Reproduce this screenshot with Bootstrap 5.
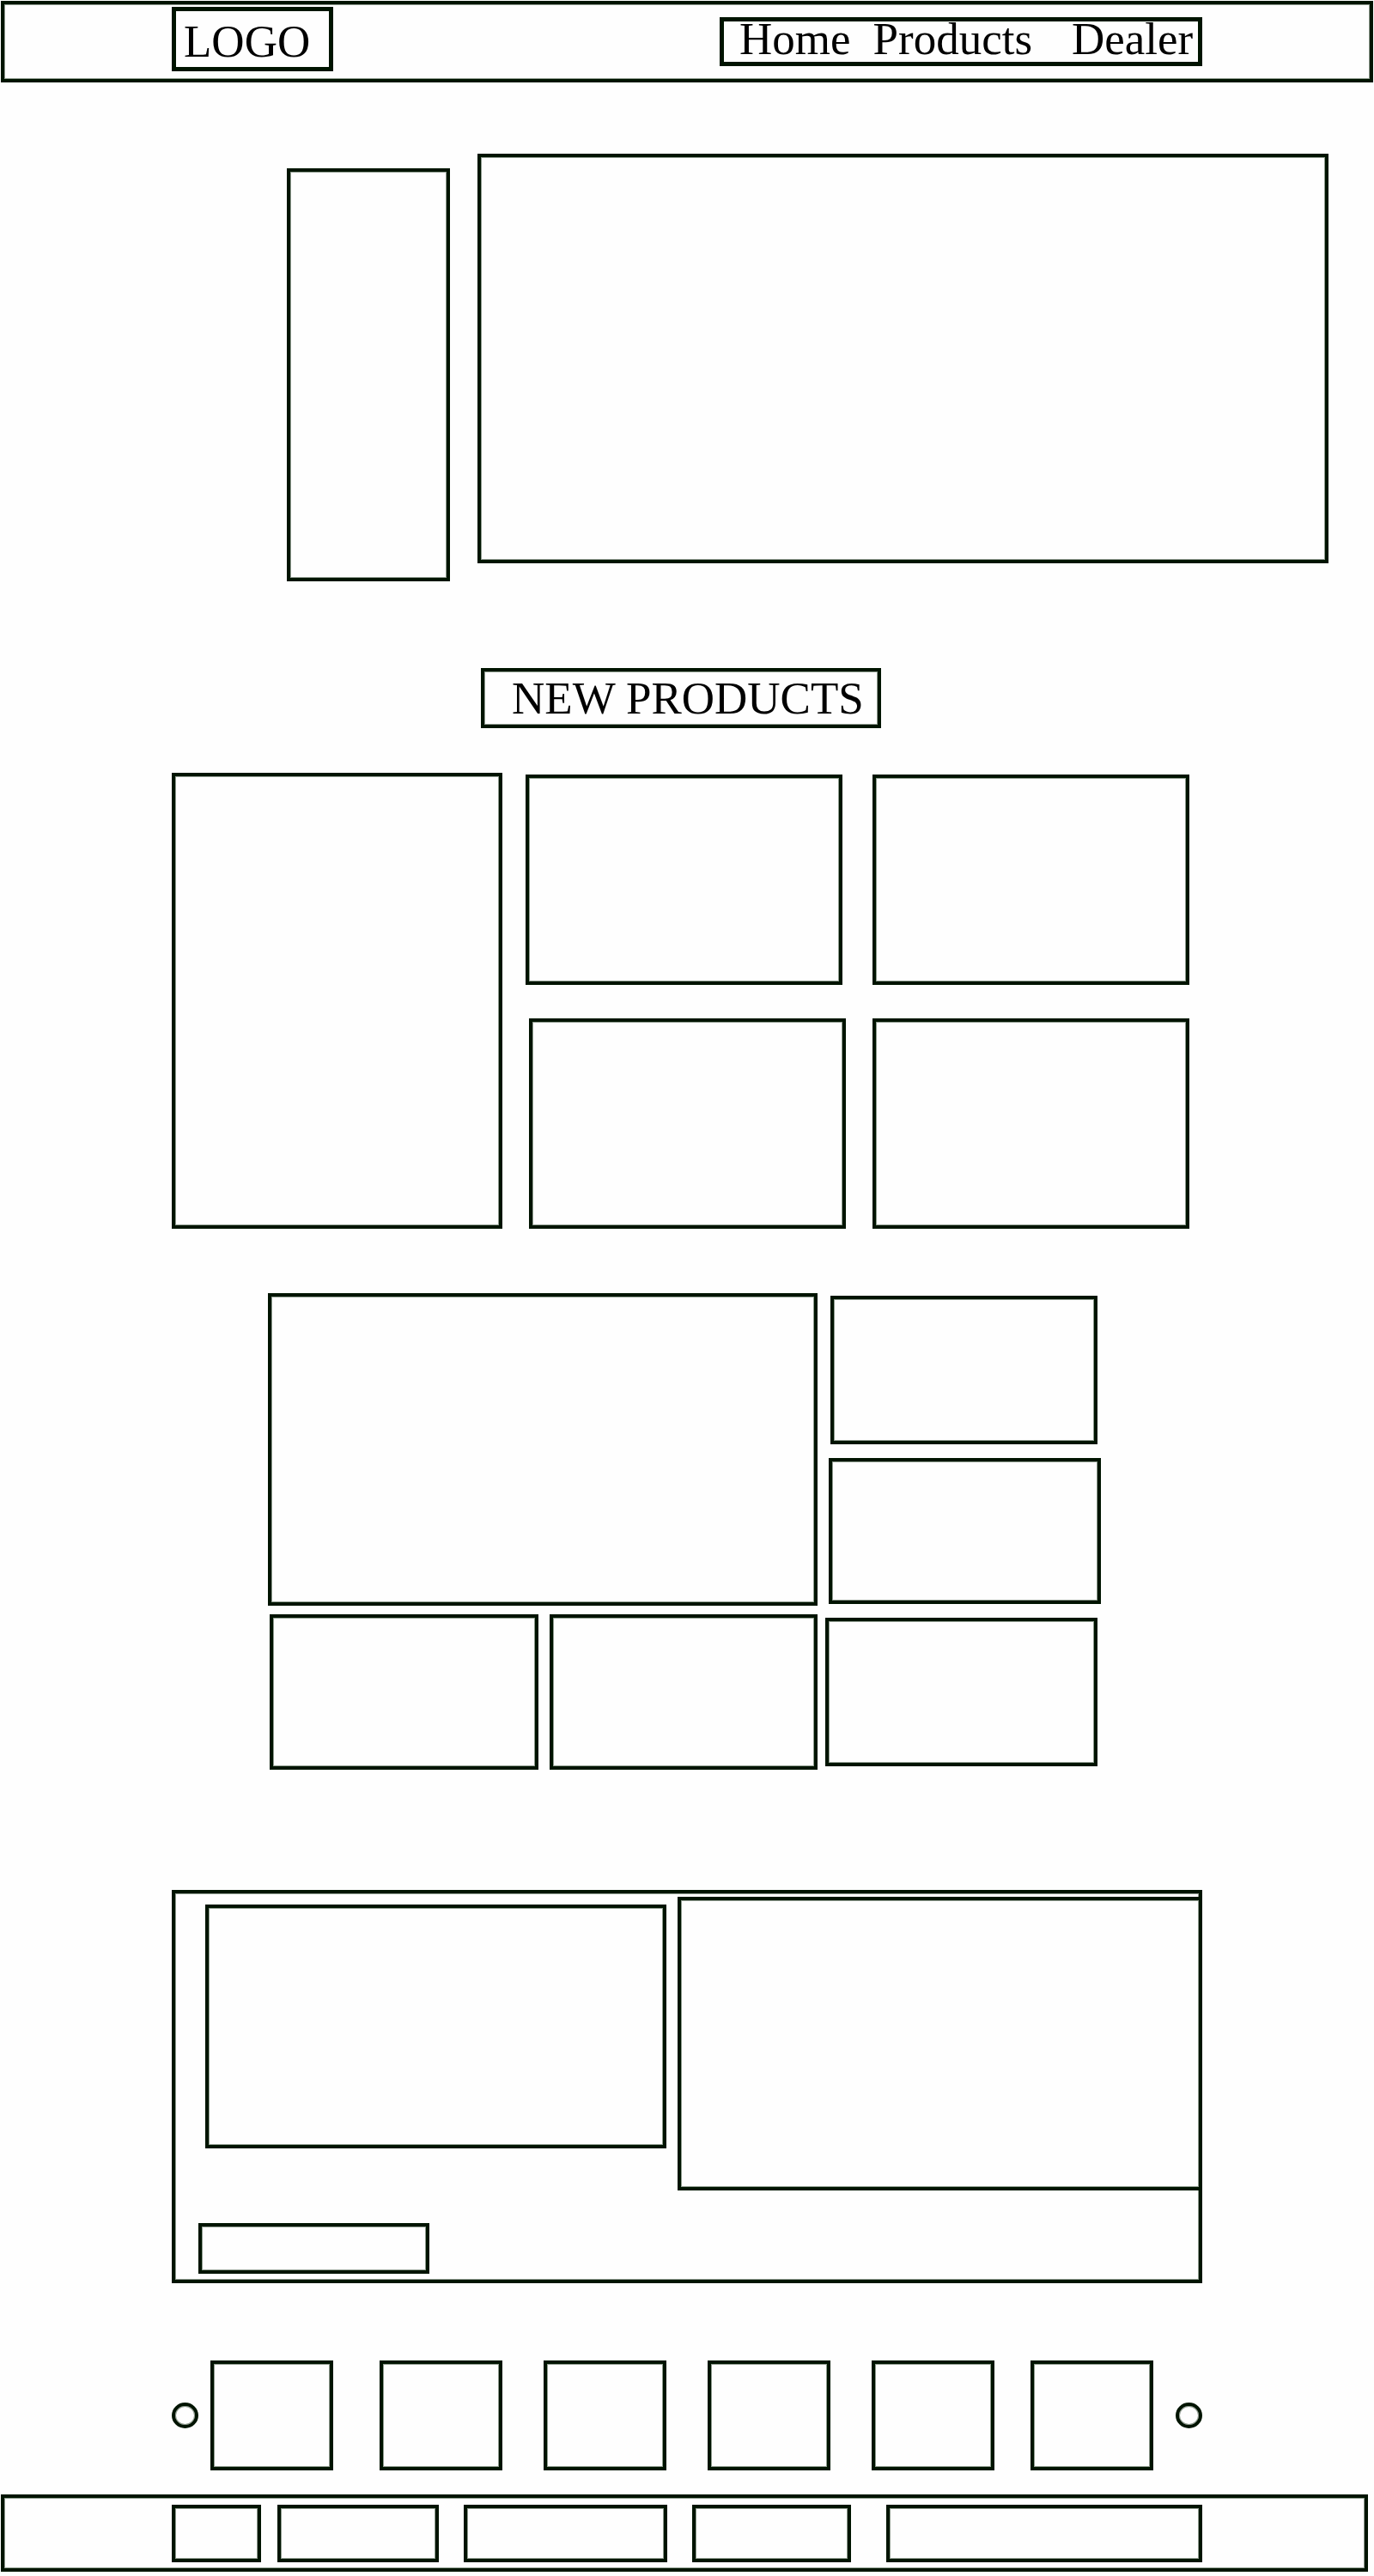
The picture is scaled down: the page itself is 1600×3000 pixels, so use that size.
<!DOCTYPE html>
<html lang="en">
<head>
<meta charset="utf-8">
<meta name="viewport" content="width=device-width, initial-scale=1">
<title>New Products</title>
<link href="https://cdn.jsdelivr.net/npm/bootstrap@5.3.0/dist/css/bootstrap.min.css" rel="stylesheet">
<style>
  :root { --ink: #001400; --edge: #8f9b8f; }
  body { background: #fefefe; color: #000; font-family: "Liberation Serif", "Times New Roman", serif; font-size: 53px; line-height: 40px; }
  .frame { border: 4px solid var(--ink); box-shadow: inset 0 0 0 1px var(--edge); background: transparent; min-width: 0; }
  .frame-bold { border: 5px solid var(--ink); }
  .wrap { width: 100%; max-width: 1200px; margin-inline: auto; }
  .wrap a { color: inherit; text-decoration: none; white-space: nowrap; }

  .site-head { height: 95px; margin: 1px 1px 0; }
  .brand-box { width: 188px; height: 75px; margin-bottom: 6px; padding: 15px 0 0 9px; }
  .menu-box { width: 562px; height: 57px; padding-left: 18px; }
  .menu-box a + a { margin-left: 26px; }
  .menu-box a:last-child { margin-left: 46px; }

  .hero { margin-top: 83px; padding: 0 53px 0 334px; gap: 32px; }
  .hero-side { flex: 0 0 190px; height: 481px; margin-top: 17px; }
  .hero-main { height: 477px; }

  .title-box { width: 466px; height: 70px; margin: 101px 0 0 360px; padding: 11px 0 0 32px; font-size: inherit; line-height: inherit; font-weight: 400; white-space: nowrap; }

  .products { margin-top: 52px; padding-right: 15px; gap: 27px; }
  .product-tall { flex: 377 1 0; height: 531px; }
  .product-grid { flex: 773 1 0; padding-top: 2px; gap: 39px; }
  .product-grid .frame { height: 245px; }
  .gap-wide { gap: 35px; }
  .gap-mid { gap: 31px; }

  .gallery { margin-top: 75px; padding: 0 118px 0 112px; gap: 9px; }
  .gallery-left { flex: 640 1 0; gap: 10px; }
  .gallery-large { height: 364px; }
  .gallery-pair { gap: 13px; padding-left: 2px; }
  .gallery-pair .frame { height: 181px; }
  .gallery-right { flex: 321 1 0; padding-top: 3px; gap: 16px; }
  .gallery-right .frame { height: 173px; margin-right: 4px; }
  .gallery-right .frame:nth-child(1) { margin-left: 6px; }
  .gallery-right .frame:nth-child(2) { height: 170px; margin-left: 4px; margin-right: 0; }

  .feature { height: 458px; margin-top: 140px; }
  .feature-row { gap: 13px; padding-left: 35px; margin-right: -4px; }
  .feature-text { flex: 536 1 0; height: 284px; margin-top: 13px; }
  .feature-image { flex: 612 1 0; height: 342px; margin-top: 4px; }
  .feature-action { display: block; width: 269px; height: 59px; margin: 38px 0 0 27px; }

  .slider { margin-top: 90px; }
  .slider-dot { flex: none; width: 31px; height: 30px; padding: 0; border-radius: 50%; }
  .slides { padding: 0 26px 0 14px; }
  .slides .frame { width: 143px; height: 128px; }
  .slides .frame + .frame { margin-left: 48px; }
  .slides .frame:nth-child(2) { margin-left: 54px; }
  .slides .frame:last-child { margin-left: 42px; }

  .site-foot { height: 90px; margin: 28px 7px 5px 1px; padding: 8px 0 0 6px; }
  .site-foot .frame { height: 67px; }
  .w-a { width: 104px; } .w-b { width: 188px; } .w-c { width: 237px; } .w-d { width: 185px; } .w-e { width: 368px; }
  .foot-row .w-b { margin-left: 19px; } .foot-row .w-c { margin-left: 29px; } .foot-row .w-d { margin-left: 29px; } .foot-row .w-e { margin-left: 41px; }
</style>
</head>
<body>
<header class="frame site-head d-flex align-items-center">
  <div class="wrap d-flex justify-content-between align-items-center">
    <a href="#" class="frame-bold brand-box">LOGO</a>
    <nav class="frame-bold menu-box d-flex"><a href="#">Home</a><a href="#products">Products</a><a href="#dealer">Dealer</a></nav>
  </div>
</header>

<main>
  <section class="hero d-flex align-items-start">
    <div class="frame hero-side"></div>
    <div class="frame hero-main flex-grow-1"></div>
  </section>

  <div class="wrap" id="products">
    <div class="d-flex"><h1 class="frame title-box">NEW PRODUCTS</h1></div>
    <section class="products d-flex">
      <div class="frame product-tall"></div>
      <div class="product-grid d-flex flex-column">
        <div class="d-flex gap-wide"><div class="frame flex-fill"></div><div class="frame flex-fill"></div></div>
        <div class="d-flex gap-mid ps-1"><div class="frame flex-fill"></div><div class="frame flex-fill"></div></div>
      </div>
    </section>

    <section class="gallery d-flex">
      <div class="gallery-left d-flex flex-column">
        <div class="frame gallery-large"></div>
        <div class="gallery-pair d-flex"><div class="frame flex-fill"></div><div class="frame flex-fill"></div></div>
      </div>
      <div class="gallery-right d-flex flex-column">
        <div class="frame"></div>
        <div class="frame"></div>
        <div class="frame"></div>
      </div>
    </section>

    <section class="frame feature" id="dealer">
      <div class="feature-row d-flex align-items-start">
        <div class="frame feature-text"></div>
        <div class="frame feature-image"></div>
      </div>
      <button type="button" class="frame feature-action" aria-label="More"></button>
    </section>

    <section class="slider d-flex align-items-center">
      <button type="button" class="frame slider-dot" aria-label="Previous"></button>
      <div class="slides d-flex flex-grow-1">
        <div class="frame"></div><div class="frame"></div><div class="frame"></div>
        <div class="frame"></div><div class="frame"></div><div class="frame"></div>
      </div>
      <button type="button" class="frame slider-dot" aria-label="Next"></button>
    </section>
  </div>
</main>

<footer class="frame site-foot">
  <div class="wrap foot-row d-flex">
    <div class="frame w-a"></div>
    <div class="frame w-b"></div>
    <div class="frame w-c"></div>
    <div class="frame w-d"></div>
    <div class="frame w-e"></div>
  </div>
</footer>
<script src="https://cdn.jsdelivr.net/npm/bootstrap@5.3.0/dist/js/bootstrap.bundle.min.js"></script>
</body>
</html>
